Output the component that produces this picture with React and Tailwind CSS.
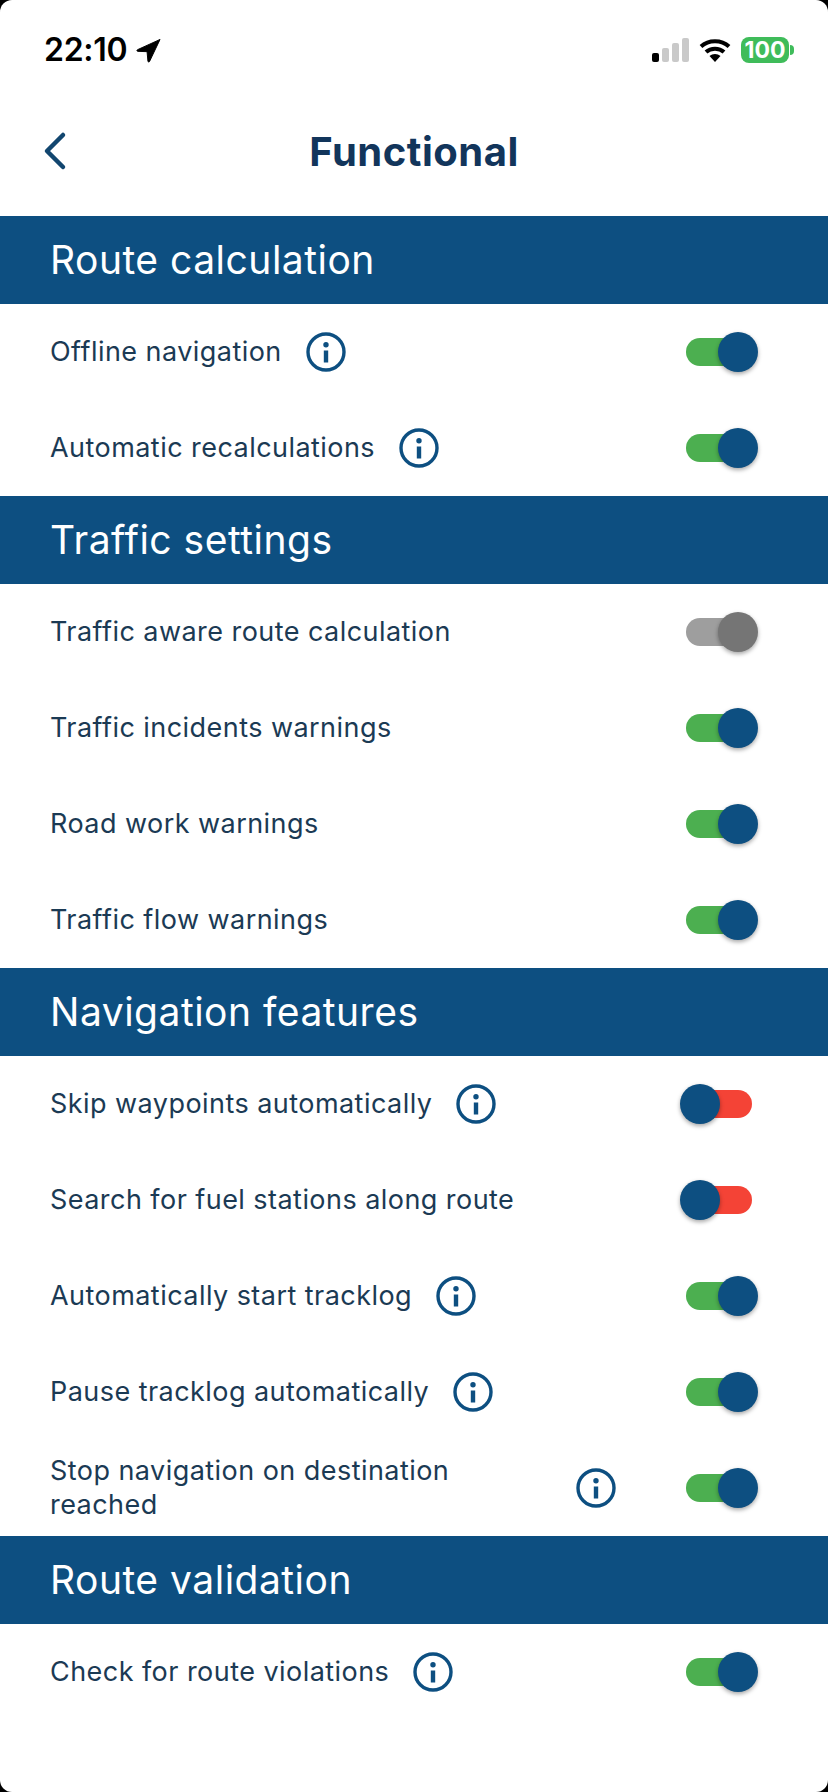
import React from 'react';

const rowText = 'text-[27px] tracking-[0.45px] leading-[34px] text-[#1b3a54]';

const InfoIcon = () => (
  <svg width="40" height="40" viewBox="0 0 40 40" className="shrink-0 ml-[24px]">
    <circle cx="20" cy="20" r="18" fill="none" stroke="#0d4f81" strokeWidth="3.4" />
    <rect x="17.8" y="18.500" width="4.4" height="12" fill="#0d4f81" />
    <circle cx="20" cy="12.8" r="2.7" fill="#0d4f81" />
  </svg>
);

const Toggle = ({ state = 'on' }) => {
  if (state === 'off') {
    return (
      <div className="relative w-[78px] h-10 shrink-0">
        <div className="absolute left-[6px] top-[6px] w-[66px] h-7 rounded-full bg-[#f44336]" />
        <div className="absolute left-0 top-0 size-10 rounded-full bg-[#0d4f81] shadow-[0_2px_4px_rgba(0,0,0,0.35)]" />
      </div>
    );
  }
  const track = state === 'on' ? 'bg-[#4caf50]' : 'bg-[#9e9e9e]';
  const thumb = state === 'on' ? 'bg-[#0d4f81]' : 'bg-[#757575]';
  return (
    <div className="relative w-[78px] h-10 shrink-0">
      <div className={`absolute left-[6px] top-[6px] w-[66px] h-7 rounded-full ${track}`} />
      <div className={`absolute right-0 top-0 size-10 rounded-full shadow-[0_2px_4px_rgba(0,0,0,0.35)] ${thumb}`} />
    </div>
  );
};

const Row = ({ label, info, state }) => (
  <div className="flex items-center h-24 pl-[50px] pr-[70px]">
    <div className="flex-1 min-w-0 flex items-center pr-[64px]">
      <span className={rowText}>{label}</span>
      {info && <InfoIcon />}
    </div>
    <Toggle state={state} />
  </div>
);

const SectionHeader = ({ title }) => (
  <div className="h-[88px] flex items-center pl-[50px] bg-[#0d4f81] text-white text-[39px] tracking-[0.5px]">
    {title}
  </div>
);

const StatusBar = () => (
  <div className="h-[98px] flex items-center justify-between pl-[44px] pr-[34px] pt-[2px]">
    <div className="flex items-center gap-[9px]">
      <span className="text-[32px] font-semibold leading-none tracking-[-0.3px] text-black">22:10</span>
      <svg width="25" height="25" viewBox="0 0 26 26">
        <path d="M25 1.500 1.500 12.200c-.9.5-.6 1.600.4 1.700l9.600.3.9 9.900c.1 1 1.300 1.200 1.700.3z" fill="#000" stroke="#000" strokeWidth="1" strokeLinejoin="round" />
      </svg>
    </div>
    <div className="flex items-center gap-[10px]">
      <svg width="37" height="24" viewBox="0 0 37 24">
        <rect x="0" y="15" width="7" height="9" rx="2" fill="#000" />
        <rect x="10" y="10" width="7" height="14" rx="2" fill="#c9c9c9" />
        <rect x="20" y="5" width="7" height="19" rx="2" fill="#c9c9c9" />
        <rect x="30" y="0" width="7" height="24" rx="2" fill="#c9c9c9" />
      </svg>
      <svg width="32" height="24" viewBox="0 0 32 24">
        <path d="M2 8.500C9.500 1.500 22.500 1.500 30 8.500M7 14c4.800-4.500 13.200-4.500 18 0" fill="none" stroke="#000" strokeWidth="4" />
        <path d="M10.500 18c3-2.800 8-2.800 11 0L16 24z" fill="#000" />
      </svg>
      <div className="flex items-center">
        <div className="w-[48px] h-[26px] rounded-[8px] bg-[#3fbc5a] flex items-center justify-center text-white text-[23px] font-bold leading-none">100</div>
        <div className="w-[4px] h-[10px] ml-[1px] rounded-r-full bg-[#3fbc5a]" />
      </div>
    </div>
  </div>
);

export default function App() {
  return (
    <div className="w-[828px] h-[1792px] bg-black" style={{ fontFamily: 'Inter, "Noto Sans", sans-serif' }}>
      <div className="h-full bg-white rounded-[12px] overflow-hidden">
        <StatusBar />
        <div className="relative h-[118px] flex items-center justify-center pb-[10px]">
          <svg width="26" height="42" viewBox="0 0 26 42" className="absolute left-[41px] top-[32px]">
            <path d="M22 5 6 21l16 16" fill="none" stroke="#12466f" strokeWidth="4.500" strokeLinecap="round" strokeLinejoin="round" />
          </svg>
          <span className="text-[40px] font-bold tracking-[0.5px] text-[#12355b]">Functional</span>
        </div>

        <SectionHeader title="Route calculation" />
        <Row label="Offline navigation" info state="on" />
        <Row label="Automatic recalculations" info state="on" />

        <SectionHeader title="Traffic settings" />
        <Row label="Traffic aware route calculation" state="disabled" />
        <Row label="Traffic incidents warnings" state="on" />
        <Row label="Road work warnings" state="on" />
        <Row label="Traffic flow warnings" state="on" />

        <SectionHeader title="Navigation features" />
        <Row label="Skip waypoints automatically" info state="off" />
        <Row label="Search for fuel stations along route" state="off" />
        <Row label="Automatically start tracklog" info state="on" />
        <Row label="Pause tracklog automatically" info state="on" />
        <Row label="Stop navigation on destination reached" info state="on" />

        <SectionHeader title="Route validation" />
        <Row label="Check for route violations" info state="on" />
      </div>
    </div>
  );
}
